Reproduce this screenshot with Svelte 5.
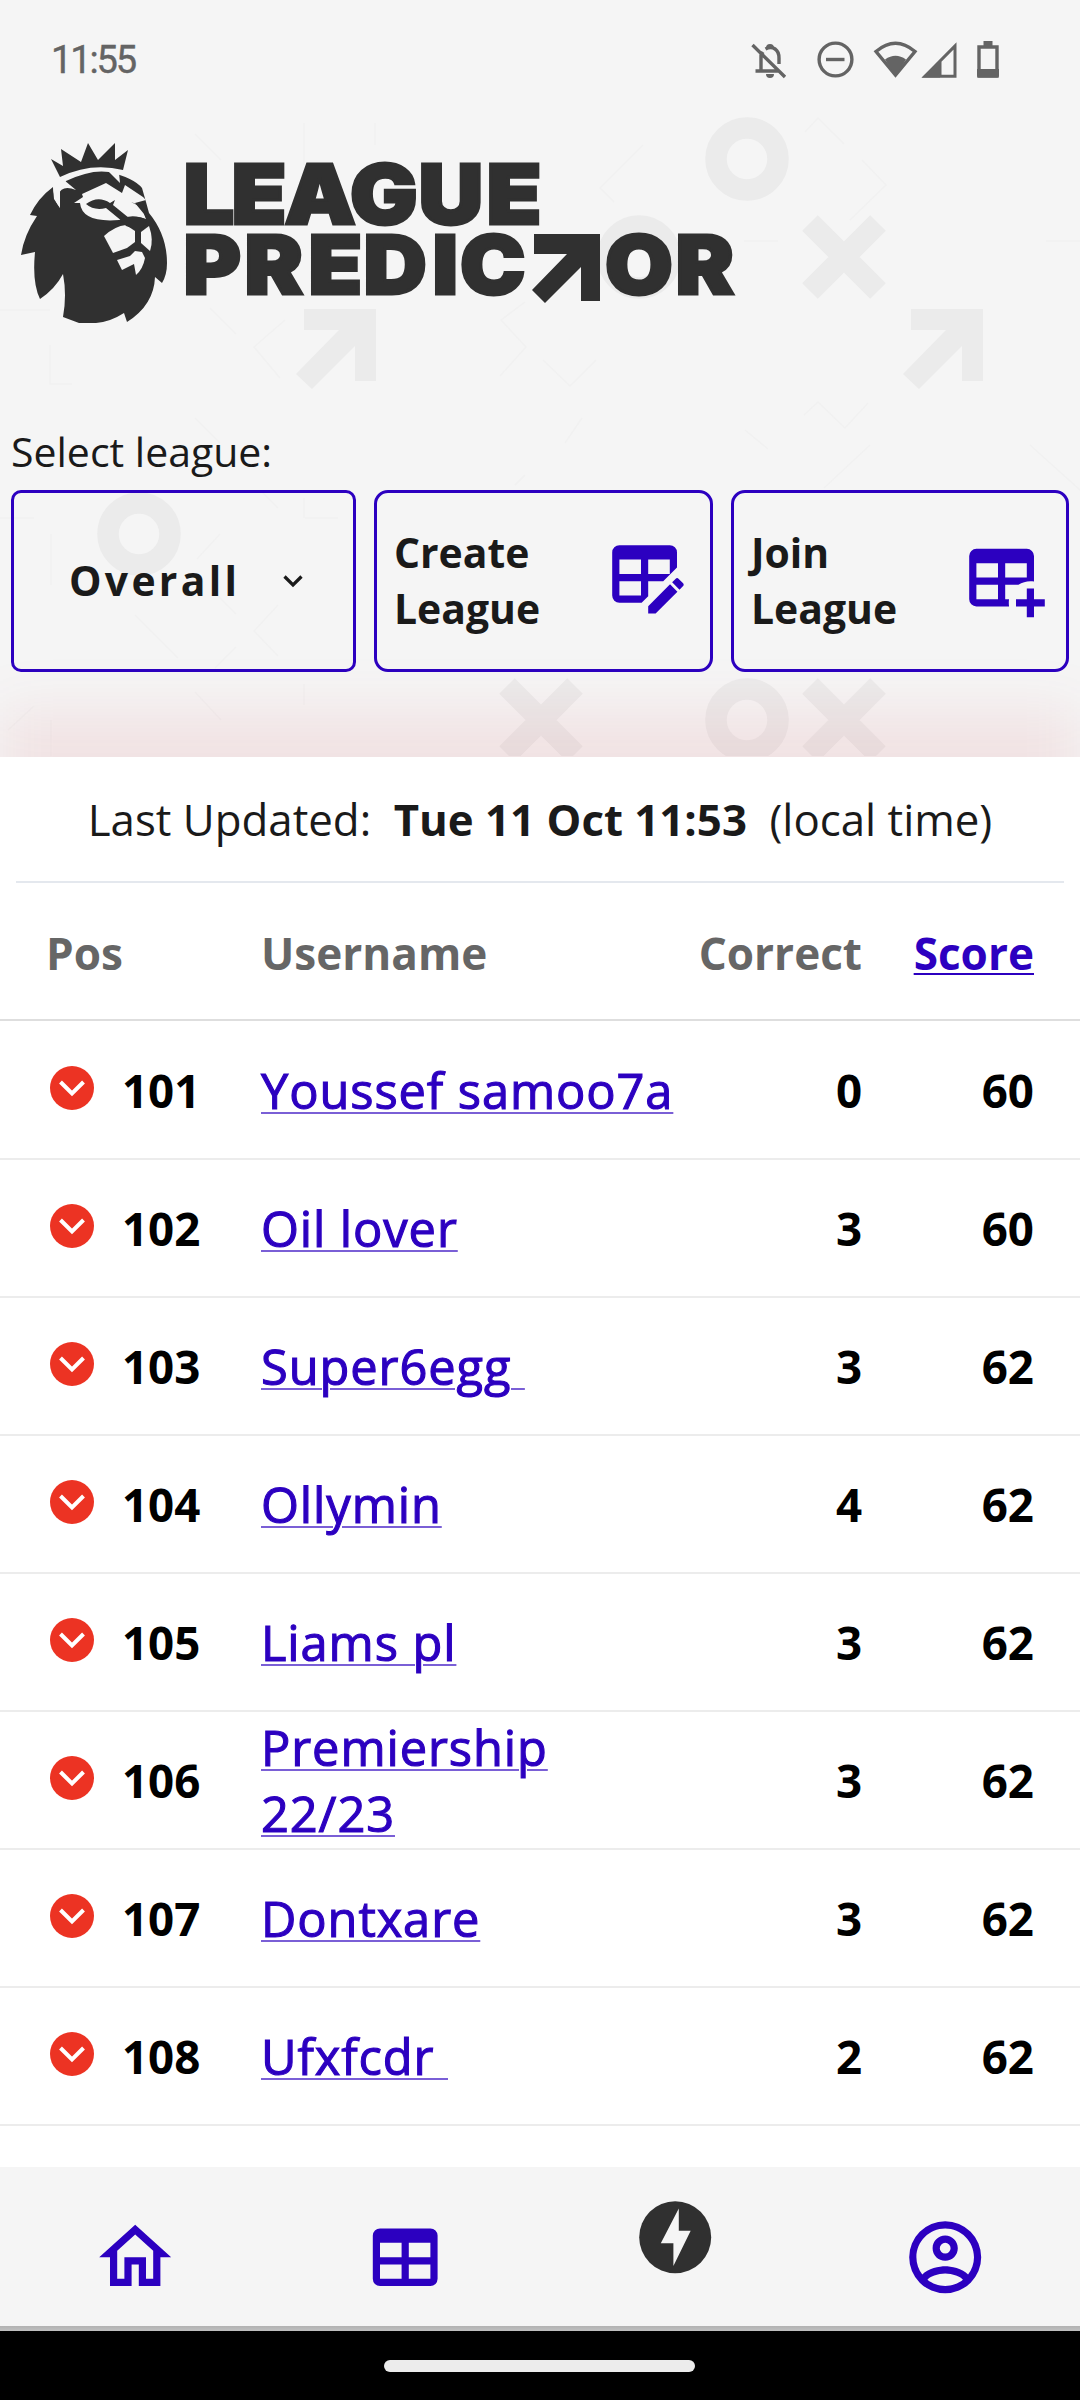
<script>
  const rows = [
    [101, 'Youssef samoo7a', 0, 60],
    [102, 'Oil lover', 3, 60],
    [103, 'Super6egg\u00a0', 3, 62],
    [104, 'Ollymin', 4, 62],
    [105, 'Liams pl', 3, 62],
    [106, 'Premiership 22/23', 3, 62],
    [107, 'Dontxare', 3, 62],
    [108, 'Ufxfcdr\u00a0', 2, 62]
  ];
  const rings = [[747, 159], [639, 257], [139, 534], [747, 720]];
  const crosses = [[844, 257], [541, 720], [844, 720]];
  const arrows = [[296, 309], [903, 309]];
</script>

<div class="screen">
  <header>
    <svg class="pattern" width="1080" height="756" viewBox="0 0 1080 756">
      {#each rings as [x, y]}
        <circle cx={x} cy={y} r="31" fill="none" stroke="#ebebeb" stroke-width="21.5" />
      {/each}
      {#each crosses as [x, y]}
        <path transform="translate({x} {y})" d="M-34-34L34 34M34-34L-34 34" stroke="#ebebeb" stroke-width="22" fill="none" />
      {/each}
      {#each arrows as [x, y]}
        <path transform="translate({x} {y})" d="M8 0H80V72H59V37L16 80L0 65L43 21H8Z" fill="#ebebeb" />
      {/each}
      <g fill="none" stroke="#f1f1f1" stroke-width="1.5">
        <path d="M643 145L600 188L614 202M805 132L818 118L844 144M862 160L886 185L850 220M195 134L221 160M304 123V165M375 123V145M744 241H778M1046 241H1080M210 308L236 334M285 320L254 347L280 378M525 302L501 320L526 347L500 376M0 310H50M50 345V384H72M543 360L570 386L596 360" />
        <path d="M195 418L220 443M582 418L565 443M525 475L515 485M804 415L818 402L845 428L868 403M745 430L768 449M870 445L824 488M1030 445L1080 490M0 518H34M51 534V585M305 518H338M304 498V518M220 534L197 559M262 492L278 508M212 590L236 614M135 615L178 658M278 605L254 631L278 656M236 647L215 668M51 720V756M34 706L8 730M195 692L221 720M304 684V705" />
      </g>
    </svg>
    <div class="status">
      <span>11:55</span>
      <svg width="270" height="60" viewBox="740 30 270 60">
        <g fill="none" stroke="#646464" stroke-width="3.4">
          <path d="M752.5 45L785 77M755.5 71H779M761 70V55L763 52M765.500 49C773 45 779 50 779 58V64" />
          <circle cx="835.500" cy="59.500" r="16.400" />
          <path d="M826 59.500H844.500" />
          <path d="M876 51.500Q895.500 35 915 51.500L895.500 75Z" />
          <path d="M955 46V76.300H925ZM940 61V76" stroke-width="3" />
          <path d="M979 47H997V76H979Z" />
        </g>
        <g fill="#646464"><path d="M766 48A4 4 0 0 1 774 48ZM766 74H774A4 4 0 0 1 766 74ZM885 59.500Q895.500 52 906 59.500L895.500 76ZM922 77.500L940 60V77.500ZM977 69H999V75.500Q999 77.500 997 77.500H979Q977 77.500 977 75.500ZM983.500 41H992.500V46H983.500Z" /></g>
      </svg>
    </div>
    <svg class="logo" width="760" height="200" viewBox="0 130 760 200" role="img" aria-label="League Predictor">
      <g fill="#303030">
        <path d="M51 159L63 166L61 149L81 162L88 143L98 160L115 143L115 160L128 150L123 170Q91 162 60 177Z" />
        <path d="M66 181Q91 169 109 172Q134 178 142 188L146 202L149 213Q167 235 167 263Q167 275 162 283L155 277Q154 305 127 322L124 313Q110 322 96 323H79L63 317Q67 295 63 274Q55 289 40 299Q32 283 35 252L21 255Q24 235 37 216L30 215Q38 198 53 187L54 199L60 208V190Z" />
      </g>
      <g fill="#f5f5f5">
        <path d="M53 183L64 180L76 190Q62 184 58 195Q57 202 60 208Q53 200 53 183Z" />
        <path d="M82 194L106 183L122 193L125 185L143 197L146 200L135 203L144 214L146 219Q136 215 124 219L119 220Q82 223 80 203L74 203L83 197Z" />
        <path d="M104 236Q115 226 126 225L135 231V242L127 248L113 253Z" />
        <path d="M141 232L149 226Q154 240 150 251L141 243Z" />
        <path d="M117 260L130 256L135 251L142 252L145 258Q143 269 136 275L134 264L122 270Z" />
      </g>
      <g fill="#303030">
        <path d="M86 204Q98 195 110 203L115 200L113 205L129 218L123 222L106 208Q94 211 86 204Z" />
        <path d="M131 202L139 205L144 204L147 213L146 218L141 207Z" />
        <path d="M120 219Q134 213 147 220L145 225L138 230L126 226Z" />
      </g>
      <path d="M106 169L119 173L120 183Z" fill="#f5f5f5" />
      <g class="wordmark" transform="scale(1.08 1)">
        <text y="224.5" font-size="83" x="169.9 214.4 263.4 324 387.500 450.4">LEAGUE</text>
        <text y="294.4" font-size="81" x="169.9 226.4 285.6 336.6 400.5 425.9">PREDIC</text>
        <text y="294.4" font-size="81" x="560.2 625.5">OR</text>
      </g>
      <path d="M534 234H600V301H581V267L545 303L532 290L567 254H534Z" fill="#303030" />
    </svg>
    <div class="select">
      <div class="label">Select league:</div>
      <div class="buttons">
        <button class="overall"><span>Overall</span>
          <svg width="24" height="20" viewBox="0 0 24 20"><path d="M3.500 4.500L12 13L20.500 4.500" fill="none" stroke="#1a1a1a" stroke-width="3.200" /></svg>
        </button>
        <button><span>Create<br />League</span>
          <svg class="edit" width="86.4" height="86.4" viewBox="0 0 24 24"><path d="M21.7,13.35L20.7,14.35L18.65,12.3L19.65,11.3C19.86,11.08 20.21,11.08 20.42,11.3L21.7,12.58C21.92,12.79 21.92,13.14 21.7,13.35M12,18.94L18.07,12.88L20.12,14.93L14.06,21H12V18.94M4,2H18A2,2 0 0,1 20,4V8.17L16.17,12H12V16.17L10.17,18H4A2,2 0 0,1 2,16V4A2,2 0 0,1 4,2M4,6V10H10V6H4M12,6V10H18V6H12M4,12V16H10V12H4Z" /></svg>
        </button>
        <button><span>Join<br />League</span>
          <svg width="86.4" height="86.4" viewBox="0 0 24 24"><path d="M18,14H20V17H23V19H20V22H18V19H15V17H18V14M4,3H18A2,2 0 0,1 20,5V12.08C18.45,11.82 16.92,12.18 15.68,13H12V17H13.08C12.97,17.68 12.97,18.35 13.08,19H4A2,2 0 0,1 2,17V5A2,2 0 0,1 4,3M4,7V11H10V7H4M12,7V11H18V7H12M4,13V17H10V13H4Z" /></svg>
        </button>
      </div>
    </div>
  </header>

  <main>
    <div class="updated"><span>Last Updated:</span><b>Tue 11 Oct 11:53</b><span>(local time)</span></div>
    <div class="row head"><span class="pos">Pos</span><span>Username</span><span class="num">Correct</span><span class="num"><a href="#score">Score</a></span></div>
    {#each rows as [pos, name, correct, score]}
      <div class="row">
        <span class="pos">
          <svg width="44" height="44" viewBox="0 0 44 44"><circle cx="22" cy="22" r="22" fill="#ec3323" /><path d="M10.500 16L22 27.500L33.500 16" fill="none" stroke="#fff" stroke-width="4" /></svg>
          <b>{pos}</b>
        </span>
        <span class="name"><a href="#user">{name}</a></span>
        <b class="num">{correct}</b>
        <b class="num">{score}</b>
      </div>
    {/each}
  </main>

  <nav>
    <svg viewBox="0 0 24 24"><path d="M12 5.69L17 10.19V18H15V12H9V18H7V10.19L12 5.69M12 3L2 12H5V20H11V14H13V20H19V12H22" /></svg>
    <svg viewBox="0 0 24 24"><path d="M5,4H19A2,2 0 0,1 21,6V18A2,2 0 0,1 19,20H5A2,2 0 0,1 3,18V6A2,2 0 0,1 5,4M5,8V12H11V8H5M13,8V12H19V8H13M5,14V18H11V14H5M13,14V18H19V14H13Z" /></svg>
    <svg class="active" viewBox="0 0 24 24"><circle cx="12" cy="12" r="10" /><path class="bolt" d="M13 4V10.200H16.300L11.500 20V13.700H8Z" /></svg>
    <svg viewBox="0 0 24 24"><path d="M12,2A10,10 0 0,0 2,12A10,10 0 0,0 12,22A10,10 0 0,0 22,12A10,10 0 0,0 12,2M7.07,18.28C7.5,17.38 10.12,16.5 12,16.5C13.88,16.5 16.5,17.38 16.93,18.28C15.57,19.36 13.86,20 12,20C10.14,20 8.43,19.36 7.07,18.28M18.36,16.83C16.93,15.09 13.46,14.5 12,14.5C10.54,14.5 7.07,15.09 5.64,16.83C4.62,15.5 4,13.82 4,12C4,7.59 7.59,4 12,4C16.41,4 20,7.59 20,12C20,13.82 19.38,15.5 18.36,16.83M12,6C10.06,6 8.5,7.56 8.5,9.5C8.5,11.44 10.06,13 12,13C13.94,13 15.5,11.44 15.5,9.5C15.5,7.56 13.94,6 12,6M12,11A1.5,1.5 0 0,1 10.5,9.5A1.5,1.5 0 0,1 12,8A1.5,1.5 0 0,1 13.5,9.5A1.5,1.5 0 0,1 12,11Z" /></svg>
  </nav>
  <div class="shade"></div>
  <div class="gesture"><div></div></div>
</div>

<style>
  :global(body) { margin: 0; background: #fff; }
  .screen { width: 1080px; height: 2400px; display: flex; flex-direction: column; overflow: hidden; font-family: "Open Sans", sans-serif; color: #1a1a1a; }
  header { position: relative; height: 757px; background: #f5f5f5; flex: none; display: flex; flex-direction: column; overflow: hidden; }
  header::after { content: ''; position: absolute; left: 0; right: 0; bottom: -200px; height: 245px; background: rgba(215, 40, 60, .09); filter: blur(28px); }
  .pattern { position: absolute; left: 0; top: 0; }
  .status { position: relative; height: 120px; box-sizing: border-box; padding: 30px 70px 0 51px; display: flex; justify-content: space-between; font: 400 38px/60px Roboto, sans-serif; letter-spacing: -2.1px; color: #646464; -webkit-text-stroke: .4px #646464; }
  .status svg { display: block; }
  .logo { display: block; position: relative; margin-top: 10px; }
  .wordmark { font-family: Inter, sans-serif; font-weight: 900; fill: #303030; stroke: #303030; stroke-width: 3; }
  .select { position: relative; padding: 94px 11px 0; }
  .label { font-size: 41px; line-height: 54px; margin-bottom: 12px; }
  .buttons { display: grid; grid-template-columns: 345px 339px 338px; gap: 18px; }
  button { height: 182px; box-sizing: border-box; border: 3px solid #2c00c0; border-radius: 14px; background: #f5f5f5cc; padding: 0 18px 0 17px; display: flex; align-items: center; justify-content: space-between; text-align: left; font: 700 40.9px/56px "Open Sans", sans-serif; color: #1a1a1a; }
  button span { margin-top: -2px; }
  .overall { background: none; border-radius: 10px; padding: 0 48px 0 55px; letter-spacing: 3.3px; }
  .overall svg { margin-top: 2px; }
  button svg { fill: #2c00c0; }
  .edit { margin-right: 1px; }
  main { flex: 1; background: #fff; }
  .updated { height: 126px; box-sizing: border-box; border-bottom: 2px solid #e4e8ee; margin: 0 16px; display: flex; justify-content: center; gap: 22.5px; font-size: 43.8px; line-height: 125px; white-space: nowrap; }
  .row { height: 138px; box-sizing: border-box; border-bottom: 2px solid #ececec; display: grid; grid-template-columns: 214px 437px 164px 172px; padding: 0 0 0 47px; align-items: center; font-size: 45.7px; color: #000; }
  .head { font-weight: 700; color: #666; border-color: #dedede; font-size: 44.1px; padding-top: 3px; }
  .head .pos { margin-left: -1px; }
  .head + .row { height: 139px; padding-top: 1px; }
  .pos { display: flex; align-items: center; gap: 28px; }
  .pos svg { margin: -4px 0 0 3px; }
  .num { text-align: right; }
  a { color: #2c00c0; text-decoration-thickness: 2px; text-underline-offset: 3px; }
  .name { font-size: 48.8px; letter-spacing: .9px; line-height: 66px; width: 418px; }
  .name a { -webkit-text-stroke: 1.1px #2c00c0; text-decoration-color: #7a5fd6; }
  nav { height: 159px; flex: none; background: #f5f5f5; display: grid; grid-template-columns: repeat(4, 1fr); justify-items: center; align-items: center; }
  nav svg { width: 86.4px; height: 86.4px; fill: #2c00c0; margin-top: 22px; }
  nav .active { fill: #303030; margin-top: -18px; }
  .bolt { fill: #f5f5f5; }
  .shade { height: 5px; flex: none; background: linear-gradient(#b2b2b2, #c0c0c0); }
  .gesture { height: 69px; flex: none; background: #000; display: flex; align-items: center; justify-content: center; }
  .gesture div { width: 311px; height: 12px; margin-right: 2px; border-radius: 6px; background: #ececec; }
</style>
